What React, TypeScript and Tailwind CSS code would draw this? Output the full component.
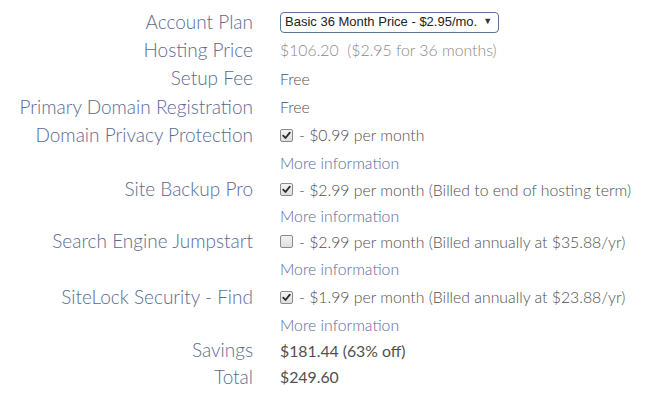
import React from "react";

const Check = ({ checked }: { checked: boolean }) => (
  <span className="inline-flex items-center justify-center w-[13px] h-[13px] border border-[#8a8a8a] rounded-[2px] bg-gradient-to-b from-[#f4f4f4] to-[#dedede] mr-[6px] shrink-0">
    {checked && (
      <svg width="9" height="9" viewBox="0 0 9 9">
        <path d="M1.2 4.6 L3.5 7 L7.8 1.6" fill="none" stroke="#2a2a2a" strokeWidth="1.8" strokeLinecap="round" strokeLinejoin="round" />
      </svg>
    )}
  </span>
);

type Row = { label?: string; h: string; content: React.ReactNode };

export default function App() {
  const more = <span className="text-[#5a6a9c]">More information</span>;
  const rows: Row[] = [
    {
      label: "Account Plan",
      h: "h-[28px]",
      content: (
        <div className="flex items-center h-[21px] border border-[#5a7397] rounded-[4px] pl-[4px] pr-[6px] bg-white text-[#222] text-[13px] [font-family:Arial,'Liberation_Sans',sans-serif]">
          <span>Basic 36 Month Price - $2.95/mo.</span>
          <span className="ml-[6px] text-[9px] text-[#333]">▼</span>
        </div>
      ),
    },
    { label: "Hosting Price", h: "h-[28px]", content: <span className="text-[#8a8a8a]">$106.20&nbsp; ($2.95 for 36 months)</span> },
    { label: "Setup Fee", h: "h-[29px]", content: <span>Free</span> },
    { label: "Primary Domain Registration", h: "h-[28px]", content: <span>Free</span> },
    {
      label: "Domain Privacy Protection",
      h: "h-[28px]",
      content: (
        <span className="flex items-center"><Check checked />- $0.99 per month</span>
      ),
    },
    { h: "h-[28px]", content: more },
    {
      label: "Site Backup Pro",
      h: "h-[25px]",
      content: (
        <span className="flex items-center"><Check checked />- $2.99 per month (Billed to end of hosting term)</span>
      ),
    },
    { h: "h-[27px]", content: more },
    {
      label: "Search Engine Jumpstart",
      h: "h-[25px]",
      content: (
        <span className="flex items-center"><Check checked={false} />- $2.99 per month (Billed annually at $35.88/yr)</span>
      ),
    },
    { h: "h-[29px]", content: more },
    {
      label: "SiteLock Security - Find",
      h: "h-[28px]",
      content: (
        <span className="flex items-center"><Check checked />- $1.99 per month (Billed annually at $23.88/yr)</span>
      ),
    },
    { h: "h-[27px]", content: more },
    { label: "Savings", h: "h-[25px]", content: <span className="text-[#505050] font-normal">$181.44 (63% off)</span> },
    { label: "Total", h: "h-[28px]", content: <span className="text-[#505050] font-normal">$249.60</span> },
  ];

  return (
    <div className="w-[652px] h-[404px] bg-white pt-[8px] [font-family:Lato,'Open_Sans',sans-serif] font-light overflow-hidden">
      {rows.map((r, i) => (
        <div key={i} className={`flex items-center ${r.h}`}>
          <div className="w-[253px] text-right text-[19px] text-[#5a6a92] whitespace-nowrap">{r.label ?? ""}</div>
          <div className="ml-[27px] text-[15.8px] text-[#505050] whitespace-nowrap flex items-center">{r.content}</div>
        </div>
      ))}
    </div>
  );
}
